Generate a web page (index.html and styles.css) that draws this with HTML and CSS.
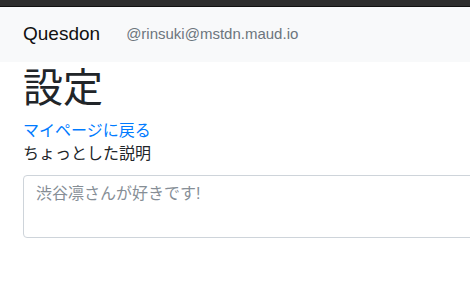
FILE: index.html
```html
<!DOCTYPE html>
<html lang="ja">
<head>
  <meta charset="UTF-8" />
  <meta name="viewport" content="width=device-width, initial-scale=1.0"/>
  <title>設定 - Quesdon</title>
  <link rel="stylesheet" href="styles.css">
</head>
<body>
  <div class="topbar"></div>
  <nav class="navbar">
    <a class="brand" href="#">Quesdon</a>
    <span class="account">@rinsuki@mstdn.maud.io</span>
  </nav>

  <div class="container">
    <h1>設定</h1>
    <a class="back" href="#">マイページに戻る</a>
    <form>
      <label for="desc">ちょっとした説明</label>
      <textarea id="desc" class="form-control" placeholder="渋谷凛さんが好きです!"></textarea>
    </form>
  </div>
</body>
</html>
```

FILE: styles.css
```css
body {
  margin: 0;
  font-family: "Liberation Sans", "Noto Sans CJK JP", sans-serif;
  font-size: 16px;
  line-height: 1.5;
  color: #212529;
  background-color: #fff;
  overflow: hidden;
}

.topbar {
  height: 6px;
  background-color: #2e2e2e;
  border-bottom: 1px solid #111;
}

.navbar {
  display: flex;
  align-items: center;
  height: 55px;
  padding: 0 23px;
  background-color: #f8f9fa;
}

.brand {
  font-size: 19px;
  color: #111;
  text-decoration: none;
  margin-right: 26px;
}

.account {
  font-size: 15px;
  color: #6c757d;
}

.container {
  padding: 0 23px;
}

h1 {
  margin: 2px 0 8px;
  font-size: 40px;
  font-weight: 400;
  line-height: 1.2;
}

.back {
  display: block;
  color: #007bff;
  text-decoration: none;
  line-height: 22px;
}

label {
  display: block;
  line-height: 24px;
  margin-bottom: 9px;
}

.form-control {
  display: block;
  box-sizing: border-box;
  width: 600px;
  height: 63px;
  padding: 6px 12px;
  font-family: inherit;
  font-size: 16px;
  line-height: 1.5;
  color: #495057;
  border: 1px solid #ced4da;
  border-radius: 4px;
  resize: none;
}

.form-control::placeholder {
  color: #868e96;
}
```
